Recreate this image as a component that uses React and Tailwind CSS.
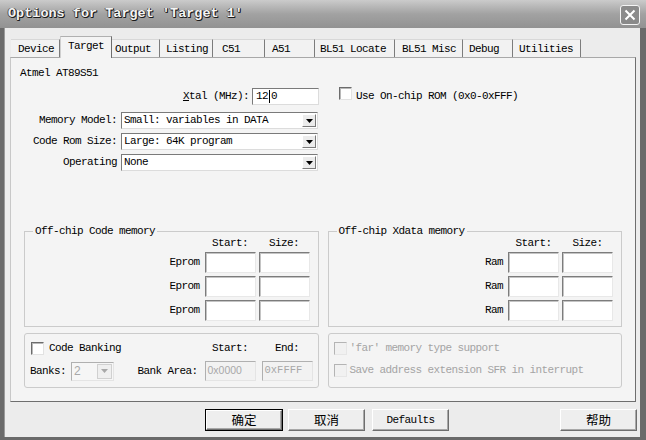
import React from 'react';

// Keil uVision "Options for Target" dialog, grayscale XP look

const tabs = [
    { label: 'Device', w: 'w-[49px]', pl: 'pl-[7px]' },
    { label: 'Target', w: 'w-[52px]', pl: 'pl-[7px]', active: true },
    { label: 'Output', w: 'w-[48px]', pl: 'pl-[3px]' },
    { label: 'Listing', w: 'w-[53px]', pl: 'pl-[6px]' },
    { label: 'C51', w: 'w-[52px]', pl: 'pl-[9px]' },
    { label: 'A51', w: 'w-[50px]', pl: 'pl-[7px]' },
    { label: 'BL51 Locate', w: 'w-[80px]', pl: 'pl-[5px]' },
    { label: 'BL51 Misc', w: 'w-[68px]', pl: 'pl-[7px]' },
    { label: 'Debug', w: 'w-[50px]', pl: 'pl-[6px]' },
    { label: 'Utilities', w: 'w-[68px]', pl: 'pl-[6px]' },
];

const Check = ({ disabled }) => (
    disabled ? (
        <span className="inline-block w-[13px] h-[13px] shrink-0 bg-[#f1f1f1] border border-t-[#b4b4b4] border-l-[#b4b4b4] border-r-[#e6e6e6] border-b-[#e6e6e6]" />
    ) : (
        <span className="inline-block w-[13px] h-[13px] shrink-0 bg-white border border-t-[#6c6c6c] border-l-[#6c6c6c] border-r-[#e2e2e2] border-b-[#e2e2e2] shadow-[inset_1px_1px_0_#b8b8b8]" />
    )
);

const Arrow = ({ disabled }) => (
    <svg width="7" height="4" viewBox="0 0 7 4">
        <path d="M0 0h7L3.5 4z" fill={disabled ? '#a8a8a8' : '#000'} />
    </svg>
);

const Combo = ({ value }) => (
    <div className="flex items-center w-[197px] h-[17px] bg-white border border-t-[#7a7a7a] border-l-[#7a7a7a] border-r-[#dcdcdc] border-b-[#dcdcdc]">
        <span className="flex-1 pl-[2px] whitespace-pre">{value}</span>
        <span className="w-[14px] h-[13px] mr-[1px] flex items-center justify-center bg-[#ececec] border border-t-white border-l-white border-r-[#7a7a7a] border-b-[#7a7a7a]">
            <Arrow />
        </span>
    </div>
);

const Field = ({ className = '' }) => (
    <div className={`h-[21px] bg-white border border-t-[#7c7c7c] border-l-[#7c7c7c] border-r-[#e8e8e8] border-b-[#e8e8e8] shadow-[inset_1px_1px_0_#c4c4c4] ${className}`} />
);

const MemGroup = ({ title, label }) => (
    <fieldset className="border border-[#cbcbcb] pb-[5px] pr-[8px]">
        <legend className="ml-[8px] px-[2px] leading-[12px]">{title}</legend>
        <div className="flex justify-end h-[12px] leading-[12px]">
            <span className="w-[51px] text-center">Start:</span>
            <span className="w-[51px] ml-[3px] text-center">Size:</span>
        </div>
        <div className="flex flex-col gap-[3px] mt-[3px]">
            {[0, 1, 2].map(i => (
                <div key={i} className="flex items-center justify-end">
                    <span className="mr-[5px]">{label}</span>
                    <Field className="w-[51px]" />
                    <Field className="w-[51px] ml-[3px]" />
                </div>
            ))}
        </div>
    </fieldset>
);

const Button = ({ children, cjk, isDefault, className = '' }) => (
    <div className={`h-[22px] flex items-center justify-center bg-[#eeeeee] ${isDefault ? 'border border-black' : ''} ${className}`}>
        <div className="w-full h-full flex items-center justify-center border border-t-white border-l-white border-r-[#6e6e6e] border-b-[#6e6e6e] shadow-[inset_-1px_-1px_0_#a8a8a8]">
            <span className={cjk ? "font-['Noto_Sans_CJK_SC',sans-serif] text-[12.5px] tracking-normal leading-none" : ''}>{children}</span>
        </div>
    </div>
);

export default function App() {
    return (
        <div className="w-[646px] h-[440px] flex flex-col bg-[#6a6a6a] font-['Liberation_Mono',monospace] text-[11px] tracking-[-0.6px] text-black select-none">
            {/* Title bar */}
            <div className="h-[28px] shrink-0 flex items-center pl-[8px] pr-[6px] bg-linear-to-b from-[#cbcbcb] via-[#a2a2a2] to-[#929292]">
                <span className="flex-1 font-bold text-[13.5px] tracking-normal text-[#f4f4f4] [text-shadow:1px_1px_0_#1a1a1a,1px_0_0_#3a3a3a,0_1px_0_#3a3a3a,-1px_0_0_#5a5a5a]">
                    Options for Target 'Target 1'
                </span>
                <span className="w-[20px] h-[20px] mt-[1px] flex items-center justify-center rounded-[3px] border border-[#f4f4f4] bg-[#8a8a8a]">
                    <svg width="12" height="12" viewBox="0 0 12 12">
                        <path d="M1.5 1.5l9 9M10.5 1.5l-9 9" stroke="#fff" strokeWidth="2" />
                    </svg>
                </span>
            </div>

            {/* Body */}
            <div className="flex-1 flex flex-col ml-[4px] mr-[6px] mb-[3px] bg-[#ececec] border-l border-[#9a9a9a]">
                {/* Tabs */}
                <div className="flex items-end h-[21px] mt-[8px] ml-[6px] relative z-10">
                    {tabs.map(t => (
                        t.active ? (
                            <div key={t.label} className={`${t.w} ${t.pl} h-[22px] -mb-[1px] pt-[3px] bg-[#f4f4f4] border-t border-l border-r border-t-[#b0b0b0] border-l-[#cfcfcf] border-r-[#6e6e6e] leading-[12px]`}>
                                {t.label}
                            </div>
                        ) : (
                            <div key={t.label} className={`${t.w} ${t.pl} h-[18px] pt-[3px] bg-[#f2f2f2] border-t border-r border-t-[#d8d8d8] border-r-[#7c7c7c] leading-[12px] whitespace-pre`}>
                                {t.label}
                            </div>
                        )
                    ))}
                </div>

                {/* Tab page */}
                <div className="h-[345px] ml-[5px] mr-[4px] flex flex-col bg-[#f4f4f4] border border-t-[#a8a8a8] border-l-[#c8c8c8] border-r-[#6e6e6e] border-b-[#6e6e6e]">
                    <div className="mt-[9px] pl-[9px] leading-[12px]">Atmel AT89S51</div>

                    <div className="flex items-center h-[17px] mt-[9px]">
                        <span className="w-[238px] text-right"><span className="underline">X</span>tal (MHz):</span>
                        <div className="w-[67px] h-[17px] ml-[3px] flex items-center pl-[3px] bg-white border border-t-[#7a7a7a] border-l-[#7a7a7a] border-r-[#dcdcdc] border-b-[#dcdcdc]">
                            12<span className="inline-block w-[1px] h-[13px] bg-black mx-[1px]" />0
                        </div>
                        <span className="ml-[20px]"><Check /></span>
                        <span className="ml-[4px]">Use On-chip ROM (0x0-0xFFF)</span>
                    </div>

                    <div className="flex flex-col gap-[4px] mt-[7px]">
                        {[
                            ['Memory Model:', 'Small: variables in DATA'],
                            ['Code Rom Size:', 'Large: 64K program'],
                            ['Operating', 'None'],
                        ].map(([l, v]) => (
                            <div key={l} className="flex items-center">
                                <span className="w-[106px] text-right">{l}</span>
                                <span className="ml-[4px]"><Combo value={v} /></span>
                            </div>
                        ))}
                    </div>

                    {/* Off-chip memory groups */}
                    <div className="grid grid-cols-2 gap-[9px] px-[13px] mt-[54px]">
                        <MemGroup title="Off-chip Code memory" label="Eprom" />
                        <MemGroup title="Off-chip Xdata memory" label="Ram" />
                    </div>

                    {/* Banking / far groups */}
                    <div className="grid grid-cols-2 gap-[9px] px-[13px] mt-[6px]">
                        <div className="h-[55px] rounded-[3px] border border-[#cbcbcb] pt-[8px] pl-[6px] pr-[5px]">
                            <div className="flex items-center h-[13px]">
                                <Check />
                                <span className="ml-[5px] flex-1">Code Banking</span>
                                <span className="w-[51px] text-center">Start:</span>
                                <span className="w-[51px] ml-[6px] text-center">End:</span>
                            </div>
                            <div className="flex items-center h-[20px] mt-[6px]">
                                <span className="-ml-[1px]">Banks:</span>
                                <div className="w-[43px] h-[19px] ml-[5px] flex items-center bg-[#f6f6f6] border border-t-[#b0b0b0] border-l-[#b0b0b0] border-r-[#e4e4e4] border-b-[#e4e4e4]">
                                    <span className="flex-1 pl-[2px] text-[#a8a8a8] font-['Liberation_Sans',sans-serif] text-[12px] tracking-normal">2</span>
                                    <span className="w-[15px] h-[15px] mr-[1px] flex items-center justify-center bg-[#efefef] border border-[#d0d0d0]">
                                        <Arrow disabled />
                                    </span>
                                </div>
                                <span className="ml-auto mr-[7px]">Bank Area:</span>
                                <div className="w-[51px] h-[20px] flex items-center pl-[2px] bg-[#f2f2f2] border border-t-[#b0b0b0] border-l-[#b0b0b0] border-r-[#e4e4e4] border-b-[#e4e4e4] text-[#a8a8a8] font-['Liberation_Sans',sans-serif] text-[10.5px] tracking-normal">0x0000</div>
                                <div className="w-[51px] h-[20px] ml-[6px] flex items-center pl-[2px] bg-[#f2f2f2] border border-t-[#b0b0b0] border-l-[#b0b0b0] border-r-[#e4e4e4] border-b-[#e4e4e4] text-[#a8a8a8] text-[10.5px] tracking-normal">0xFFFF</div>
                            </div>
                        </div>
                        <div className="h-[55px] rounded-[3px] border border-[#cbcbcb] pt-[8px] pl-[5px] flex flex-col gap-[9px] text-[#a4a4a4]">
                            <div className="flex items-center h-[13px]">
                                <Check disabled />
                                <span className="ml-[3px]">'far' memory type support</span>
                            </div>
                            <div className="flex items-center h-[13px]">
                                <Check disabled />
                                <span className="ml-[3px]">Save address extension SFR in interrupt</span>
                            </div>
                        </div>
                    </div>
                </div>

                {/* Buttons */}
                <div className="flex items-center mt-[7px] pl-[200px] pr-[3px]">
                    <Button cjk isDefault className="w-[78px]">确定</Button>
                    <Button cjk className="w-[77px] ml-[5px]">取消</Button>
                    <Button className="w-[77px] ml-[7px]">Defaults</Button>
                    <Button cjk className="w-[77px] ml-auto">帮助</Button>
                </div>
            </div>
        </div>
    );
}
